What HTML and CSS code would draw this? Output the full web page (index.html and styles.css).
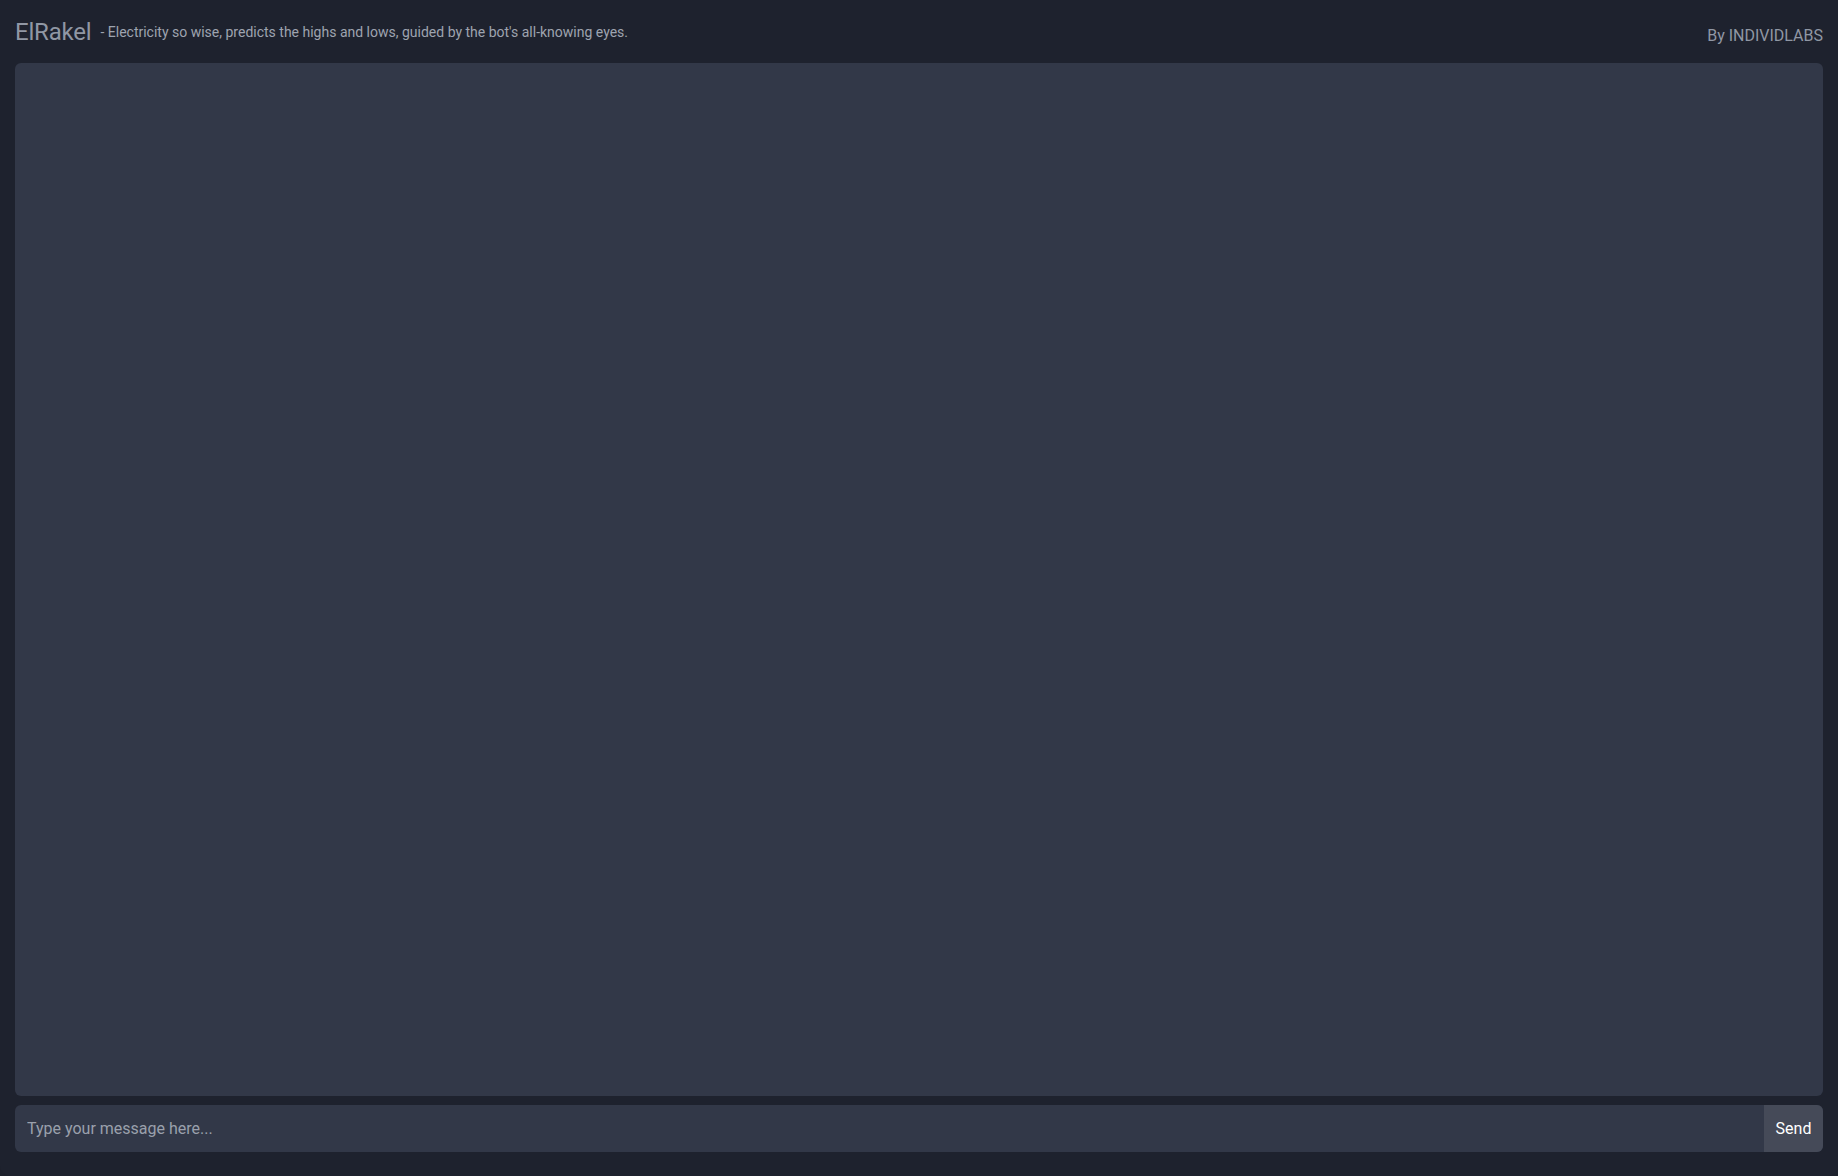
FILE: index.html
```html
<!DOCTYPE html>
<html lang="en">
<head>
<meta charset="utf-8">
<title>ElRakel</title>
<link rel="stylesheet" href="styles.css">
</head>
<body>
<div class="app">
  <header class="topbar">
    <div class="brand">
      <h1 class="title">ElRakel</h1>
      <span class="tagline">- Electricity so wise, predicts the highs and lows, guided by the bot's all-knowing eyes.</span>
    </div>
    <div class="credit">By INDIVIDLABS</div>
  </header>
  <main class="chat"></main>
  <form class="composer">
    <input class="composer-input" type="text" placeholder="Type your message here...">
    <button class="composer-send" type="button">Send</button>
  </form>
</div>
</body>
</html>
```
FILE: styles.css
```css
* { box-sizing: border-box; }
html, body { margin: 0; height: 100%; background: #1d212c; }
body { font-family: Roboto, "Noto Sans", "Liberation Sans", sans-serif; }

.app {
  height: 100vh;
  display: flex;
  flex-direction: column;
  padding: 0 15px 24px;
  background: #1e222e;
  border-radius: 0 0 10px 10px;
}

.topbar {
  height: 63px;
  display: flex;
  align-items: flex-start;
  justify-content: space-between;
  padding-top: 18px;
}
.brand { display: flex; align-items: baseline; gap: 9px; }
.title {
  margin: 0;
  font-size: 24px;
  font-weight: 400;
  color: #9097a4;
  letter-spacing: -0.2px;
}
.tagline { font-size: 14px; color: #9ea4b0; position: relative; top: -3px; }
.credit { font-size: 16px; color: #9097a4; padding-top: 8px; }

.chat {
  flex: 1;
  background: #323848;
  border-radius: 6px;
}

.composer {
  margin-top: 9px;
  height: 47px;
  display: flex;
  border-radius: 6px;
  overflow: hidden;
  background: #323848;
}
.composer-input {
  flex: 1;
  border: 0;
  outline: 0;
  background: transparent;
  padding: 0 12px;
  font: 16px Roboto, "Noto Sans", sans-serif;
  color: #e5e7eb;
}
.composer-input::placeholder { color: #9aa0ac; }
.composer-send {
  width: 59px;
  border: 0;
  background: #454a58;
  color: #ffffff;
  font: 400 16px Roboto, "Noto Sans", sans-serif;
  cursor: pointer;
}
```
